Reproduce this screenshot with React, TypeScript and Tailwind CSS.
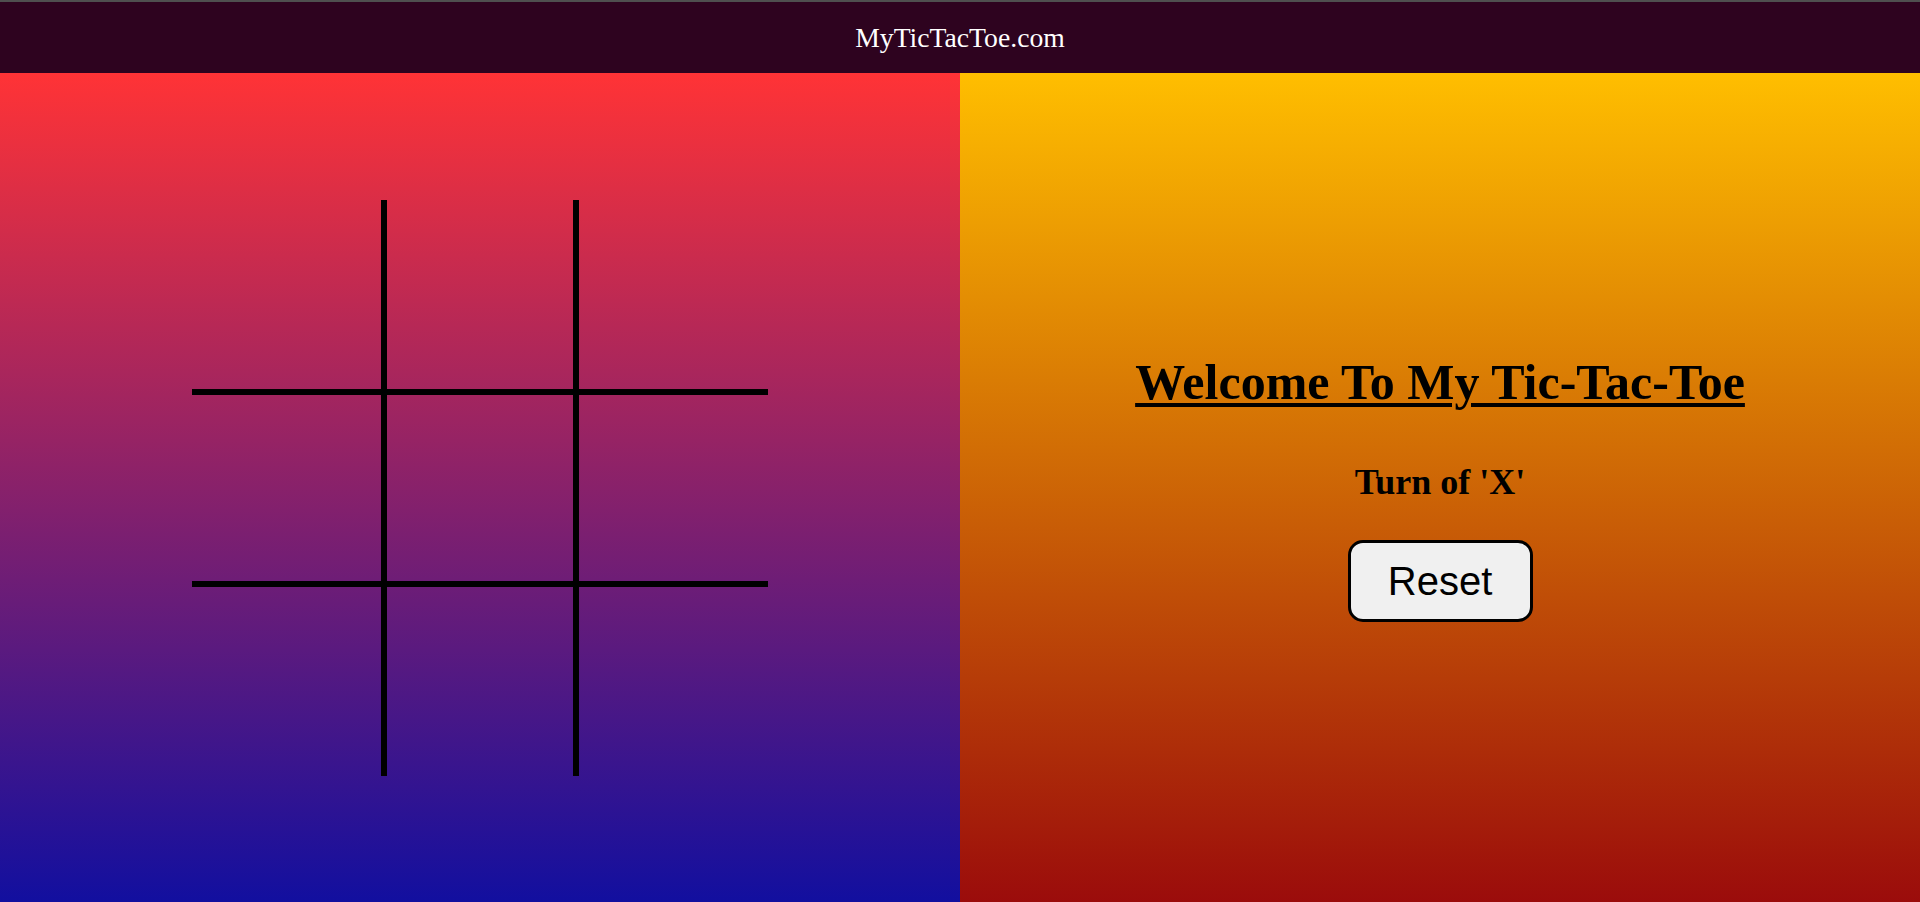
import React, { useState } from "react";

const cellClasses = [
  "border-r-[6px] border-b-[6px] border-black",
  "border-r-[6px] border-b-[6px] border-black",
  "border-b-[6px] border-black",
  "border-r-[6px] border-b-[6px] border-black",
  "border-r-[6px] border-b-[6px] border-black",
  "border-b-[6px] border-black",
  "border-r-[6px] border-black",
  "border-r-[6px] border-black",
  "",
];

export default function App() {
  const [board, setBoard] = useState<string[]>(Array(9).fill(""));
  const [turn, setTurn] = useState<"X" | "O">("X");

  const play = (i: number) => {
    if (board[i]) return;
    const next = board.slice();
    next[i] = turn;
    setBoard(next);
    setTurn(turn === "X" ? "O" : "X");
  };

  const reset = () => {
    setBoard(Array(9).fill(""));
    setTurn("X");
  };

  return (
    <div className="min-h-screen flex flex-col font-['Liberation_Serif',_'Times_New_Roman',_serif]">
      <header className="h-[73px] shrink-0 border-t-2 border-[#4f4f4f] bg-[#2e031f] flex items-center justify-center">
        <span className="text-white text-[27.7px]">MyTicTacToe.com</span>
      </header>
      <main className="flex-1 flex">
        <section className="w-1/2 flex items-center justify-center bg-[linear-gradient(to_bottom,#ff3336,#120f9f)]">
          <div className="grid grid-cols-[195px_192px_189px] grid-rows-[195px_192px_189px]">
            {board.map((v, i) => (
              <div
                key={i}
                onClick={() => play(i)}
                className={`${cellClasses[i]} flex items-center justify-center cursor-pointer text-[120px] font-bold text-black`}
              >
                {v}
              </div>
            ))}
          </div>
        </section>
        <section className="w-1/2 flex flex-col items-center justify-center bg-[linear-gradient(to_bottom,#ffbe00,#9b0c0b)]">
          <h1 className="text-[50px] font-bold text-black underline decoration-[4px] underline-offset-[4px] leading-[56px]">
            Welcome To My Tic-Tac-Toe
          </h1>
          <h2 className="mt-[52px] text-[36px] font-bold text-black leading-[40px]">
            Turn of '{turn}'
          </h2>
          <button
            onClick={reset}
            className="mt-[38px] w-[185px] h-[82px] rounded-[15px] border-[3px] border-black bg-[#f0f0f0] text-black text-[40px] font-['Liberation_Sans',_Arial,_sans-serif] cursor-pointer flex items-center justify-center"
          >
            Reset
          </button>
        </section>
      </main>
    </div>
  );
}
